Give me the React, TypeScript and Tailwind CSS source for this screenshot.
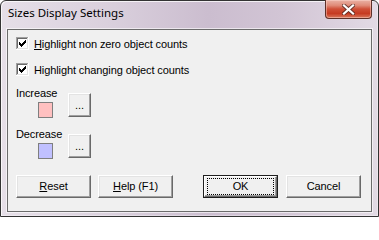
import React from "react";

const checkPath =
  "M9 3h1v1h-1z M8 4h2v1h-2z M3 5h1v1h-1z M7 5h3v1h-3z M3 6h2v1h-2z M6 6h3v1h-3z M3 7h5v1h-5z M4 8h3v1h-3z M5 9h1v1h-1z";

function CheckBox() {
  return (
    <svg width="13" height="13" viewBox="0 0 13 13" shapeRendering="crispEdges" className="shrink-0 block">
      <rect x="0" y="0" width="13" height="13" fill="#ffffff" />
      <rect x="0" y="0" width="12" height="1" fill="#a0a0a0" />
      <rect x="0" y="0" width="1" height="12" fill="#a0a0a0" />
      <rect x="1" y="1" width="10" height="1" fill="#696969" />
      <rect x="1" y="1" width="1" height="10" fill="#696969" />
      <rect x="1" y="11" width="11" height="1" fill="#e3e3e3" />
      <rect x="11" y="1" width="1" height="11" fill="#e3e3e3" />
      <path d={checkPath} fill="#000000" />
    </svg>
  );
}

function DotsButton() {
  return (
    <div className="mt-[6px] w-[23px] h-[24px] flex items-center justify-center bg-[#f0f0f0] border border-t-white border-l-white border-r-[#696969] border-b-[#696969] shadow-[inset_-1px_-1px_0_#a0a0a0,inset_1px_1px_0_#e3e3e3]">
      <span className="text-[11px] leading-[13px] mt-[1px]">...</span>
    </div>
  );
}

function ColorRow({ label, color }: { label: string; color: string }) {
  return (
    <div className="flex">
      <div className="w-[52px] flex flex-col">
        <div className="h-[13px] text-[11px] leading-[13px] whitespace-nowrap">{label}</div>
        <div
          className="ml-[22px] mt-[2px] w-[15px] h-[16px] border border-[#7f7f7f]"
          style={{ backgroundColor: color }}
        />
      </div>
      <DotsButton />
    </div>
  );
}

function PushButton({ children, className }: { children: React.ReactNode; className?: string }) {
  return (
    <div
      className={
        "w-[75px] h-[23px] flex items-center justify-center bg-[#f0f0f0] border border-t-white border-l-white border-r-[#696969] border-b-[#696969] shadow-[inset_-1px_-1px_0_#a0a0a0,inset_1px_1px_0_#e3e3e3] " +
        (className ?? "")
      }
    >
      <span className="text-[11px] leading-[13px]">{children}</span>
    </div>
  );
}

function DefaultButton({ children, className }: { children: React.ReactNode; className?: string }) {
  return (
    <div className={"w-[75px] h-[23px] border border-[#1e1e1e] " + (className ?? "")}>
      <div className="w-full h-full flex items-center justify-center bg-[#f0f0f0] border border-t-white border-l-white border-r-[#696969] border-b-[#696969] shadow-[inset_-1px_-1px_0_#a0a0a0]">
        <div className="w-[67px] h-[17px] border border-dotted border-black flex items-center justify-center">
          <span className="text-[11px] leading-[13px]">{children}</span>
        </div>
      </div>
    </div>
  );
}

function CloseButton() {
  return (
    <div className="-mt-[1px] w-[47px] h-[19px] rounded-b-[4px] border border-t-0 border-[#5e3028] bg-[linear-gradient(180deg,#eab2a5_0%,#e08b78_30%,#cf4f37_50%,#c63b22_75%,#d9785c_100%)] shadow-[inset_0_0_0_1px_rgba(255,220,210,0.45)] flex items-center justify-center">
      <svg width="13" height="11" viewBox="0 0 13 11" className="block">
        <path d="M2 1.5 L11 9.5 M11 1.5 L2 9.5" stroke="#4a2620" strokeWidth="4" strokeLinecap="square" opacity="0.75" />
        <path d="M2 1.5 L11 9.5 M11 1.5 L2 9.5" stroke="#ffffff" strokeWidth="2.2" strokeLinecap="square" />
      </svg>
    </div>
  );
}

export default function App() {
  return (
    <div className="w-[379px] h-[217px] bg-white overflow-hidden">
      <div className="w-[379px] h-[217px] flex flex-col rounded-t-[6px] border border-[#333333] bg-[linear-gradient(90deg,#e6dfe8_0%,#d9cfdc_30%,#cbbdcf_55%,#d2c5d5_75%,#e2dae4_100%)] shadow-[inset_1px_1px_0_rgba(255,255,255,0.75),inset_-1px_-1px_0_rgba(255,255,255,0.35)]">
        <div className="h-[28px] shrink-0 flex items-start justify-between pl-[7px] pr-[6px]">
          <span className="mt-[4px] text-[11.5px] leading-[16px] text-black font-['Noto_Sans',sans-serif] whitespace-nowrap">
            Sizes Display Settings
          </span>
          <CloseButton />
        </div>
        <div className="mx-[6px] h-[183px] shrink-0 border border-[#6b6b6b] bg-[#f0f0f0] shadow-[0_0_0_1px_rgba(255,255,255,0.6)] font-['Liberation_Sans',Arial,sans-serif] text-black tracking-[-0.1px]">
          <div className="pl-[8px] pt-[7px] flex flex-col">
            <div className="h-[13px] flex items-start">
              <CheckBox />
              <span className="ml-[5px] mt-[1px] text-[11px] leading-[13px] whitespace-nowrap">
                <span className="underline">H</span>ighlight non zero object counts
              </span>
            </div>
            <div className="mt-[13px] h-[13px] flex items-start">
              <CheckBox />
              <span className="ml-[5px] mt-[1px] text-[11px] leading-[13px] whitespace-nowrap">
                Highlight changing object counts
              </span>
            </div>
            <div className="mt-[11px]">
              <ColorRow label="Increase" color="#ffc0c0" />
            </div>
            <div className="mt-[10px]">
              <ColorRow label="Decrease" color="#c0c0ff" />
            </div>
            <div className="mt-[16px] flex">
              <PushButton>
                <span className="underline">R</span>eset
              </PushButton>
              <PushButton className="ml-[7px]">
                <span className="underline">H</span>elp (F1)
              </PushButton>
              <DefaultButton className="ml-[30px]">OK</DefaultButton>
              <PushButton className="ml-[8px]">Cancel</PushButton>
            </div>
          </div>
        </div>
      </div>
    </div>
  );
}
